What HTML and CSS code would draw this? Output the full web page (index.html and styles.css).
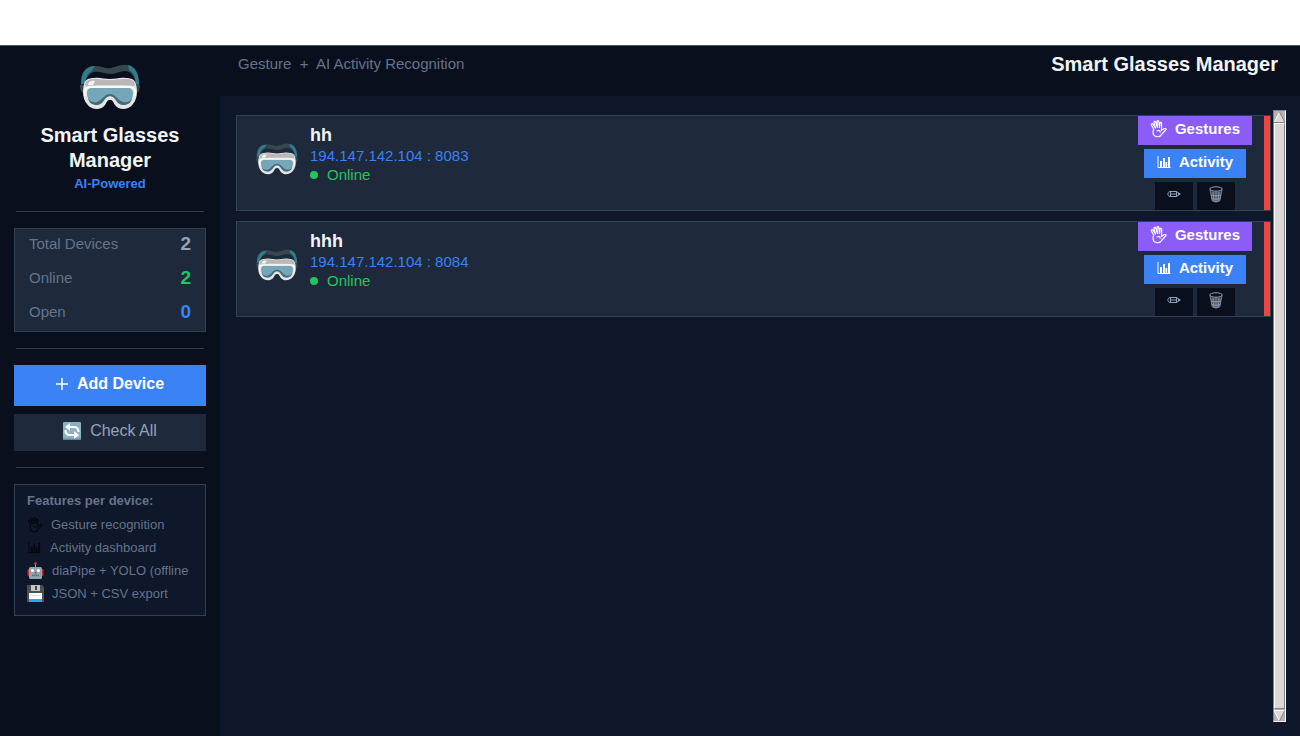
FILE: index.html
```html
<!DOCTYPE html>
<html lang="en">
<head>
    <meta charset="UTF-8">
    <meta name="viewport" content="width=device-width, initial-scale=1.0">
    <title>Smart Glasses Manager</title>
    <link rel="stylesheet" href="styles.css">
</head>
<body>
    <!-- Shared icons -->
    <svg class="sprite" aria-hidden="true">
        <symbol id="goggles" viewBox="0 0 60 46">
            <path d="M1 20C1 8 5 3 13 2c7-.6 12 3 18 2 6-1 9-4 16-3 8 1 11 8 12 19l-3 1c-1-7-3-11-7-13-6-3-12 2-18 2-7 0-12-3-17-2-5 1-8 6-9 12z" fill="#37474f"/>
            <path d="M1 21C1 9 5 3 15 2l-3 5c-4 2-6 6-7 12zM48 1c8 2 11 9 11 20l-3-1c-1-8-3-12-7-14z" fill="#2f7c8c"/>
            <path d="M0 21h5v9c-3-1-5-3-5-9zM60 21h-5v9c3-1 5-3 5-9z" fill="#37474f"/>
            <path d="M4 20c1-4 4-6 10-6 6-1 10 1 16 1s10-2 16-1c6 0 9 2 10 6 2 8 1 15-3 20-4 6-14 7-18 1-2-3-2-5-5-5s-3 2-5 5c-4 6-14 5-18-1-4-5-5-12-3-20z" fill="#e4e4e4"/>
            <path d="M5 22c0-5 3-7 9-7 6-.5 10 1 16 1s10-1.500 16-1c6 0 9 2 9 7-8-1-42-1-50 0z" fill="#b8b8b8"/>
            <path d="M8 20c1-3 4-4 7-3l-2 4H8z" fill="#f5f5f5"/>
            <path d="M12 24h36c3 0 5 2 5 5 0 7-4 12-10 12-7 0-7-9-13-9s-6 9-13 9C11 41 7 36 7 29c0-3 2-5 5-5z" fill="#75a7b8"/>
            <path d="M8 34c2 4 5 5 9 4 5-1 7-8 13-8s8 7 13 8c4 1 7 0 9-4-1 5-4 7-9 7-7 0-7-9-13-9s-6 9-13 9c-5 0-8-2-9-7z" fill="#456b7b"/>
            <path d="M5 32c-1-6 0-9 6-9h38c6 0 7 3 6 9" fill="none" stroke="#fff" stroke-width="1.500"/>
        </symbol>
        <symbol id="hand" viewBox="0 0 17 18">
            <path d="M4 9.500 1.300 5c-.5-1.200 1-1.800 1.600-.8L5.500 8 4 2.500c-.2-1.200 1.300-1.500 1.700-.4L7.500 7.500 7 1.500C7 .3 8.600.3 8.800 1.500L9.500 7.500 10 3c.2-1 1.600-.8 1.600.3L11.500 10.500l2.500-1.700c1.500-.8 2.800.3 1.600 1.300L12 14c-1 1.800-2.500 3-5 2.700C4.500 16.500 3 14.500 3 12c0-1.200 0-2 1-2.500M6.500 11c2-1 3.500-.6 4 1.500" fill="none" stroke="currentColor" stroke-width="1.200" stroke-linejoin="round"/>
        </symbol>
        <symbol id="chart" viewBox="0 0 14 14">
            <path d="M1 1v11.500h12.500" fill="none" stroke="currentColor"/>
            <path d="M3 6h2v6H3zM6 3h2v9H6zM8.500 7h1.700v5H8.500zM11 2h2v10h-2z" fill="currentColor"/>
        </symbol>
        <symbol id="pencil" viewBox="0 0 14 8">
            <path d="M3 1.500h6.500L13.300 4 9.500 6.500H3C.2 6.500.2 1.500 3 1.500zM3.500 1.500v5M9.500 1.500v5M3.500 4h6M11.500 3v2" fill="none" stroke="currentColor"/>
        </symbol>
        <symbol id="trash" viewBox="0 0 14 17">
            <path d="M1.500 5 3 14c.5 2.500 7.500 2.500 8 0l1.500-9c-2 1.500-9 1.500-11 0z" fill="currentColor" fill-opacity=".45"/>
            <ellipse cx="7" cy="3" rx="6.200" ry="2.200" fill="none" stroke="currentColor"/>
            <path d="M1 3.500 3 14c.5 2.500 7.500 2.500 8 0l2-10.500M4 5.500l1 10M7 5.500v10M10 5.500l-1 10M2 9c3 1 7 1 10 0M3 12.500c2 1 6 1 8 0" fill="none" stroke="currentColor" stroke-width=".8"/>
        </symbol>
    </svg>

    <div class="top-strip"></div>
    <div class="app">
        <aside class="sidebar">
            <div class="brand">
                <svg class="brand-icon"><use href="#goggles"/></svg>
                <h1>Smart Glasses Manager</h1>
                <p>AI-Powered</p>
            </div>
            <hr>
            <dl class="stats">
                <div><dt>Total Devices</dt><dd>2</dd></div>
                <div><dt>Online</dt><dd class="green">2</dd></div>
                <div><dt>Open</dt><dd class="blue">0</dd></div>
            </dl>
            <hr>
            <button class="add-btn">
                <svg width="12" height="12"><path d="M6 0v12M0 6h12" stroke="#fff" stroke-width="1.500"/></svg>
                Add Device
            </button>
            <button class="check-btn">
                <svg width="18" height="18" viewBox="0 0 18 18">
                    <rect width="18" height="18" rx="1" fill="#8eb2c1"/>
                    <path d="M0 16.500h18V18H0z" fill="#648b99"/>
                    <path d="M15.500 10C15.500 6.500 14 5 11 5H6" fill="none" stroke="#fff" stroke-width="2.200"/>
                    <path d="M7 1v8L2 5zM11 9v8l5-4z" fill="#fff"/>
                    <path d="M2.500 8c0 3.500 1.500 5 4.500 5h5" fill="none" stroke="#fff" stroke-width="2.200"/>
                </svg>
                Check All
            </button>
            <hr>
            <section class="features">
                <h2>Features per device:</h2>
                <ul>
                    <li><svg class="dark" width="16" height="16"><use href="#hand"/></svg>Gesture recognition</li>
                    <li><svg class="dark" width="15" height="13"><use href="#chart"/></svg>Activity dashboard</li>
                    <li>
                        <svg width="17" height="17" viewBox="0 0 16 17">
                            <path d="M8 2v4" stroke="#90a4ae"/>
                            <circle cx="8" cy="1.500" r="1.200" fill="#e53935"/>
                            <rect y="7" width="3" height="7" rx="1" fill="#c62828"/>
                            <rect x="13" y="7" width="3" height="7" rx="1" fill="#c62828"/>
                            <rect x="1.500" y="5" width="13" height="12" rx="1.500" fill="#90a4ae"/>
                            <circle cx="5" cy="8.500" r="1.500" fill="#fff"/>
                            <circle cx="11" cy="8.500" r="1.500" fill="#fff"/>
                            <path d="M8 9.500 7 11.500h2z" fill="#c62828"/>
                            <path d="M4.500 13.500h7" stroke="#546e7a" stroke-width="1.500" stroke-dasharray="1.500 .5"/>
                        </svg>diaPipe + YOLO (offline
                    </li>
                    <li>
                        <svg width="17" height="17" viewBox="0 0 17 17">
                            <path d="M0 0h15l2 2v15H0z" fill="#4b4f52"/>
                            <path d="M4 0h9v6H4z" fill="#c4c4c4"/>
                            <path d="M8 1h2v4H8z" fill="#37474f"/>
                            <path d="M2 8h13v6H2z" fill="#fff"/>
                            <path d="M2 14h13v3H2z" fill="#29a8e8"/>
                            <path d="M3 10.500h11" stroke="#ddd"/>
                        </svg>JSON + CSV export
                    </li>
                </ul>
            </section>
        </aside>

        <main>
            <header class="topbar">
                <span>Gesture&nbsp; +&nbsp; AI Activity Recognition</span>
                <strong>Smart Glasses Manager</strong>
            </header>
            <div class="content">
                <div class="device-list">
                    <article class="device">
                        <svg class="device-icon"><use href="#goggles"/></svg>
                        <div class="info">
                            <h3>hh</h3>
                            <p class="address">194.147.142.104 : 8083</p>
                            <p class="status">Online</p>
                        </div>
                        <div class="actions">
                            <button class="gestures"><svg width="17" height="18"><use href="#hand"/></svg>Gestures</button>
                            <button class="activity"><svg width="14" height="14"><use href="#chart"/></svg>Activity</button>
                            <div class="tools">
                                <button aria-label="Edit"><svg width="14" height="8"><use href="#pencil"/></svg></button>
                                <button aria-label="Delete"><svg width="14" height="17"><use href="#trash"/></svg></button>
                            </div>
                        </div>
                    </article>
                    <article class="device">
                        <svg class="device-icon"><use href="#goggles"/></svg>
                        <div class="info">
                            <h3>hhh</h3>
                            <p class="address">194.147.142.104 : 8084</p>
                            <p class="status">Online</p>
                        </div>
                        <div class="actions">
                            <button class="gestures"><svg width="17" height="18"><use href="#hand"/></svg>Gestures</button>
                            <button class="activity"><svg width="14" height="14"><use href="#chart"/></svg>Activity</button>
                            <div class="tools">
                                <button aria-label="Edit"><svg width="14" height="8"><use href="#pencil"/></svg></button>
                                <button aria-label="Delete"><svg width="14" height="17"><use href="#trash"/></svg></button>
                            </div>
                        </div>
                    </article>
                </div>
                <div class="scrollbar">
                    <button aria-label="Scroll up"><svg width="11" height="11"><path d="M5.500 0 11 11H0z" fill="#d9d9d9"/><path d="M0 11 5.500 0" stroke="#fff"/><path d="M5.500 0 11 10.500H0" fill="none" stroke="#828282"/></svg></button>
                    <div class="thumb"></div>
                    <button aria-label="Scroll down"><svg width="11" height="11"><path d="M0 0h11L5.500 11z" fill="#d9d9d9"/><path d="M11 .5H0L5.500 11" fill="none" stroke="#fff"/><path d="M11 0 5.500 11" stroke="#828282"/></svg></button>
                </div>
            </div>
        </main>
    </div>
</body>
</html>
```
FILE: styles.css
```css
* {
    box-sizing: border-box;
}

body {
    margin: 0;
    min-height: 100vh;
    display: flex;
    flex-direction: column;
    background-color: #0f172a;
    font-family: "Liberation Sans", Arial, sans-serif;
    font-size: 15px;
    color: #64748b;
}

h1, h2, h3, p, dl, dd, ul {
    margin: 0;
    padding: 0;
}

button {
    display: flex;
    justify-content: center;
    align-items: center;
    border: none;
    padding: 0;
    font-family: inherit;
    font-size: 15px;
    cursor: pointer;
}

.sprite {
    display: none;
}

.top-strip {
    height: 45px;
    background-color: #fff;
}

.app {
    flex: 1;
    display: flex;
    border-top: 1px solid #4b5260;
}

/* Sidebar */
.sidebar {
    width: 220px;
    padding: 18px 14px;
    background-color: #0a0f1e;
}

.brand {
    text-align: center;
}

.brand-icon {
    display: block;
    width: 60px;
    height: 46px;
    margin: 0 auto 13px;
}

.brand h1 {
    padding: 0 20px;
    font-size: 20px;
    line-height: 25px;
    color: #f1f5f9;
}

.brand p {
    font-size: 13px;
    font-weight: bold;
    line-height: 22px;
    color: #3b82f6;
}

hr {
    height: 1px;
    margin: 16px 2px;
    border: none;
    background-color: #334155;
}

.stats {
    border: 1px solid #334155;
    background-color: #1e293b;
    padding: 0 14px;
}

.stats div {
    display: flex;
    justify-content: space-between;
    height: 34px;
    line-height: 30px;
}

.stats dd {
    font-size: 19px;
    font-weight: bold;
    color: #94a3b8;
}

.stats .green {
    color: #22c55e;
}

.stats .blue {
    color: #3b82f6;
}

.add-btn,
.check-btn {
    width: 100%;
    gap: 9px;
    font-size: 16px;
    padding-bottom: 4px;
}

.add-btn {
    height: 41px;
    margin-bottom: 8px;
    background-color: #3b82f6;
    color: #fff;
    font-weight: bold;
}

.check-btn {
    height: 37px;
    background-color: #1e293b;
    color: #94a3b8;
}

.features {
    border: 1px solid #334155;
    background-color: #0f172a;
    padding: 4px 12px 10px;
    font-size: 13px;
}

.features h2 {
    font-size: 13px;
    line-height: 24px;
}

.features li {
    display: flex;
    align-items: center;
    gap: 8px;
    height: 23px;
    white-space: nowrap;
}

.features .dark {
    color: #05070e;
}

/* Main area */
main {
    flex: 1;
    display: flex;
    flex-direction: column;
}

.topbar {
    display: flex;
    justify-content: space-between;
    height: 50px;
    padding: 0 22px 0 18px;
    line-height: 36px;
    background-color: #0a0f1e;
}

.topbar strong {
    font-size: 20px;
    color: #f1f5f9;
}

.content {
    flex: 1;
    display: flex;
    gap: 2px;
    padding: 14px 14px 14px 16px;
}

.device-list {
    flex: 1;
    padding-top: 5px;
}

.device {
    display: flex;
    height: 96px;
    margin-bottom: 10px;
    border: 1px solid #334155;
    background-color: #1e293b;
    padding-left: 19px;
}

.device-icon {
    width: 42px;
    height: 32px;
    margin: 27px 12px 0 0;
}

.info {
    flex: 1;
    padding-top: 8px;
}

.info h3 {
    font-size: 18px;
    line-height: 22px;
    color: #f1f5f9;
}

.info p {
    line-height: 19px;
}

.address {
    color: #3b82f6;
}

.status {
    display: flex;
    align-items: center;
    gap: 9px;
    color: #22c55e;
}

.status::before {
    content: "";
    width: 8px;
    height: 8px;
    border-radius: 50%;
    background-color: #22c55e;
}

.actions {
    display: flex;
    flex-direction: column;
    align-items: center;
    gap: 4px;
    padding-right: 12px;
    border-right: 6px solid #ef4444;
}

.gestures,
.activity {
    height: 29px;
    padding: 0 13px 4px;
    gap: 8px;
    color: #fff;
    font-weight: bold;
}

.gestures {
    padding: 0 12px 4px;
    background-color: #8b5cf6;
}

.activity {
    background-color: #3b82f6;
}

.tools {
    display: flex;
    gap: 4px;
}

.tools button {
    width: 38px;
    height: 28px;
    padding-bottom: 4px;
    background-color: #0a0f1e;
    color: #94a3b8;
}

/* Scrollbar */
.scrollbar {
    display: flex;
    flex-direction: column;
    width: 13px;
    border: 1px solid;
    border-color: #828282 #fff #fff #828282;
    background-color: #b3b3b3;
}

.scrollbar button {
    height: 12px;
    background-color: #b3b3b3;
}

.thumb {
    flex: 1;
    border: 1px solid;
    border-color: #fff #828282 #828282 #fff;
    background-color: #d9d9d9;
}
```
